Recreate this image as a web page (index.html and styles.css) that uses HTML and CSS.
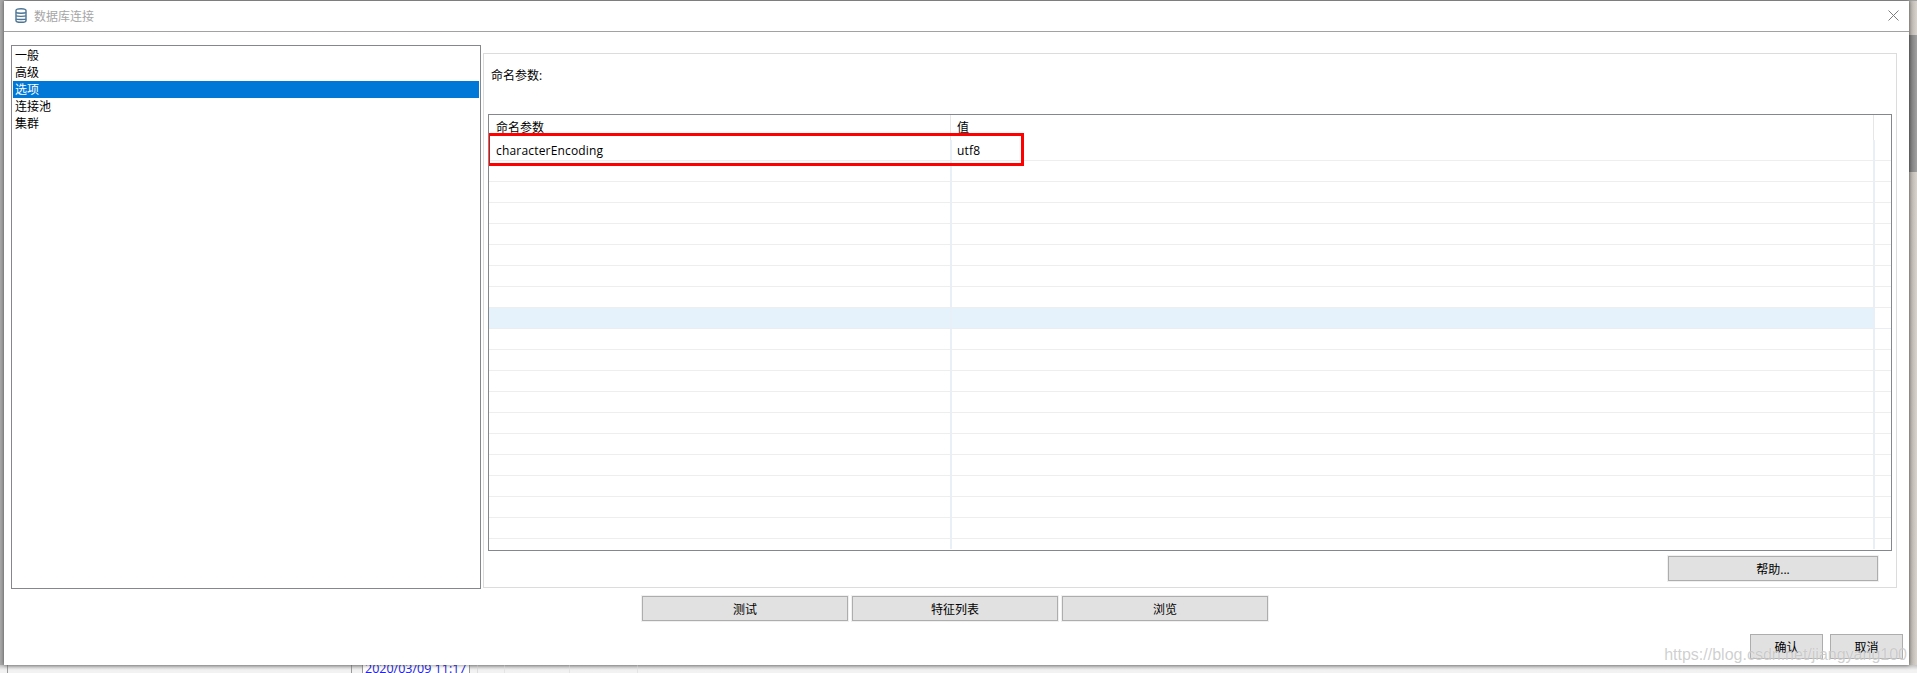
FILE: index.html
```html
<!DOCTYPE html>
<html lang="zh-CN">
<head>
<meta charset="utf-8">
<title>数据库连接</title>
<link rel="stylesheet" href="styles.css">
</head>
<body>
<div class="backdrop">
  <div class="scrollthumb"></div>
  <div class="under-strip">
    <span class="cell c1"></span><span class="cell c2"></span><span class="cell c3"></span>
    <span class="cell c4">2020/03/09 11:17</span><span class="cell c5"></span><span class="cell c6"></span>
    <span class="cell c7"></span><span class="cell c8"></span><span class="cell c9"></span>
  </div>
</div>
<main class="dialog">
  <header class="titlebar">
    <svg class="db-icon" width="12" height="15" viewBox="0 0 12 15" aria-hidden="true">
      <path d="M1 2.6C1 1.4 3 .7 6 .7s5 .7 5 1.9v9.8c0 1.2-2 1.9-5 1.9s-5-.7-5-1.900z" fill="#fff" stroke="#4c7596" stroke-width="1.4"/>
      <path d="M1 4.600c1 .9 9 .9 10 0M1 7.800c1 .7 9 .7 10 0M1 11c1 .7 9 .7 10 0" fill="none" stroke="#4c7596" stroke-width="1.4"/>
    </svg>
    <span class="title">数据库连接</span>
    <svg class="close" width="11" height="11" viewBox="0 0 11 11" aria-hidden="true">
      <path d="M.5.5l10 10M10.500.5l-10 10" stroke="#7d7d7d" stroke-width="1"/>
    </svg>
  </header>
  <div class="content">
    <ul class="nav">
      <li class="nav-item">一般</li>
      <li class="nav-item">高级</li>
      <li class="nav-item active">选项</li>
      <li class="nav-item">连接池</li>
      <li class="nav-item">集群</li>
    </ul>
    <section class="panel">
      <div class="label">命名参数:</div>
      <div class="grid">
        <div class="row head"><div class="cell-a">命名参数</div><div class="cell-b">值</div><div class="cell-c"></div></div>
        <div class="row first"><div class="cell-a latin">characterEncoding</div><div class="cell-b latin">utf8</div><div class="cell-c"></div></div>
        <div class="row"><div class="cell-a"></div><div class="cell-b"></div><div class="cell-c"></div></div>
        <div class="row"><div class="cell-a"></div><div class="cell-b"></div><div class="cell-c"></div></div>
        <div class="row"><div class="cell-a"></div><div class="cell-b"></div><div class="cell-c"></div></div>
        <div class="row"><div class="cell-a"></div><div class="cell-b"></div><div class="cell-c"></div></div>
        <div class="row"><div class="cell-a"></div><div class="cell-b"></div><div class="cell-c"></div></div>
        <div class="row"><div class="cell-a"></div><div class="cell-b"></div><div class="cell-c"></div></div>
        <div class="row"><div class="cell-a"></div><div class="cell-b"></div><div class="cell-c"></div></div>
        <div class="row hover"><div class="cell-a"></div><div class="cell-b"></div><div class="cell-c"></div></div>
        <div class="row"><div class="cell-a"></div><div class="cell-b"></div><div class="cell-c"></div></div>
        <div class="row"><div class="cell-a"></div><div class="cell-b"></div><div class="cell-c"></div></div>
        <div class="row"><div class="cell-a"></div><div class="cell-b"></div><div class="cell-c"></div></div>
        <div class="row"><div class="cell-a"></div><div class="cell-b"></div><div class="cell-c"></div></div>
        <div class="row"><div class="cell-a"></div><div class="cell-b"></div><div class="cell-c"></div></div>
        <div class="row"><div class="cell-a"></div><div class="cell-b"></div><div class="cell-c"></div></div>
        <div class="row"><div class="cell-a"></div><div class="cell-b"></div><div class="cell-c"></div></div>
        <div class="row"><div class="cell-a"></div><div class="cell-b"></div><div class="cell-c"></div></div>
        <div class="row"><div class="cell-a"></div><div class="cell-b"></div><div class="cell-c"></div></div>
        <div class="row"><div class="cell-a"></div><div class="cell-b"></div><div class="cell-c"></div></div>
        <div class="row tail"><div class="cell-a"></div><div class="cell-b"></div><div class="cell-c"></div></div>
        <div class="redbox"></div>
      </div>
      <div class="help-row"><button class="btn help">帮助...</button></div>
    </section>
  </div>
  <div class="actions">
    <button class="btn wide">测试</button>
    <button class="btn wide">特征列表</button>
    <button class="btn wide">浏览</button>
  </div>
  <div class="footer">
    <button class="btn small">确认</button>
    <button class="btn small">取消</button>
  </div>
  <div class="watermark">https://blog.csdn.net/jiangyang100</div>
</main>
</body>
</html>
```
FILE: styles.css
```css
* { box-sizing: border-box; }
html, body { margin: 0; height: 673px; overflow: hidden; }
body {
  position: relative;
  padding: 1px 8px 0 4px;
  background: #d9d5cf;
  font-family: "Open Sans", "Noto Sans CJK SC", sans-serif;
  font-size: 12px;
  color: #000;
}
.backdrop {
  position: absolute; inset: 0;
  background: linear-gradient(90deg, #a9a9a9 0 4px, transparent 4px), linear-gradient(#a3a3a3 0 1px, transparent 1px), linear-gradient(90deg, #e4e1dc 1905px, #b4b0aa 1909px, #d8d3cc 1917px);
}
.scrollthumb {
  position: absolute; right: 0; top: 35px; width: 8px; height: 137px;
  background: linear-gradient(90deg, #777, #a0a0a0);
}
.under-strip {
  position: absolute; left: 0; right: 0; top: 665px; height: 8px;
  display: flex; background: linear-gradient(#c4c4c4, #f2f2f2 5px); overflow: hidden;
}
.cell { display: block; height: 8px; border-left: 1px solid #9a9a9a; flex: none; overflow: hidden; white-space: nowrap; }
.c1 { width: 7px; border-left: 0; }
.c2 { width: 344px; }
.c3 { width: 5px; }
.c4 { width: 107px; margin-left: 6px; padding-left: 2px; color: #2222dd; font: 12.5px/8px "Open Sans", sans-serif; background: #fff; }
.c5 { width: 8px; }
.c6 { width: 27px; border-left-color: #dddddd; }
.c7 { width: 65px; border-left-color: #e4e4e4; }
.c8 { width: 68px; border-left-color: #e4e4e4; }
.c9 { flex: 1; border-left-color: #e4e4e4; }

.dialog {
  position: relative;
  width: 1905px;
  height: 664px;
  background: #fff;
  display: flex;
  flex-direction: column;
  box-shadow: 0 0 4px rgba(0, 0, 0, .55);
}
.titlebar {
  flex: none; height: 31px;
  border-bottom: 1px solid #a2a2a2;
  display: flex; align-items: center;
  padding: 0 10px 1px 11px;
}
.db-icon { flex: none; }
.title { margin-left: 7px; margin-top: 2px; color: #a6a6a6; line-height: 17px; }
.close { margin-left: auto; }

.content { flex: none; display: flex; gap: 2px; padding: 13px 12px 0 7px; }
.nav {
  flex: none; width: 470px; height: 544px; margin: 0; padding: 1px;
  list-style: none; border: 1px solid #85878d;
}
.nav-item { height: 17px; line-height: 17px; padding-left: 2px; }
.nav-item.active { background: #0078d7; color: #fff; }

.panel {
  flex: none; width: 1414px; height: 535px; margin-top: 8px;
  border: 1px solid #dcdcdc; padding: 13px 4px 0;
}
.label { height: 17px; line-height: 17px; padding-left: 3px; }
.grid {
  position: relative; height: 437px; margin-top: 30px;
  border: 1px solid #84878c; overflow: hidden;
}
.row { display: grid; grid-template-columns: 463px 923px 15px; height: 21px; border-bottom: 1px solid #eeeeee; line-height: 20px; }
.row.head { height: 25px; border-bottom: 0; line-height: 25px; }
.row.first { line-height: 22px; }
.row.hover { background: linear-gradient(90deg, #e5f2fc 1386px, #fff 1386px); border-bottom-color: #e8eef4; }
.row.tail { height: 10px; border-bottom: 0; }
.cell-a, .cell-b { border-right: 2px solid #e9eff7; }
.cell-a { padding-left: 7px; }
.cell-b { padding-left: 5px; }
.latin { letter-spacing: .18px; }
.row.head .cell-a, .row.head .cell-b { border-right: 1px solid #e6e6e6; margin-right: 1px; }
.redbox {
  position: absolute; left: -2px; top: 18px; width: 537px; height: 33px;
  border: 3px solid #ff0000;
}
.help-row { display: flex; justify-content: flex-end; margin-top: 5px; padding-right: 14px; }

.btn {
  display: block; padding: 0; height: 25px;
  background: #e1e1e1; border: 1px solid #adadad;
  box-shadow: 0 0 0 1px #f0f0f0;
  font: inherit; color: #000;
}
.help { width: 210px; }
.wide { width: 206px; }
.small { width: 73px; box-shadow: none; }
.actions { flex: none; display: flex; gap: 4px; margin: 7px 0 0 638px; }
.footer { flex: none; display: flex; gap: 7px; justify-content: flex-end; padding-right: 6px; margin-top: 13px; }
.watermark {
  position: absolute; right: 2px; bottom: 0;
  font: 16px/20px "Liberation Sans", sans-serif;
  color: rgba(175, 175, 175, .6);
  text-shadow: 0 0 1px rgba(255, 255, 255, .7);
  white-space: nowrap;
}
```
